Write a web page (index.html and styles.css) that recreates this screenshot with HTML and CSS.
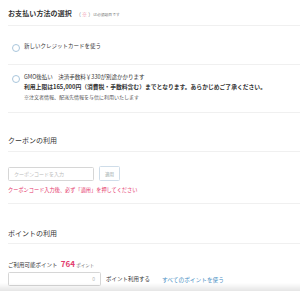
FILE: index.html
```html
<!DOCTYPE html>
<html lang="ja">
<head>
<meta charset="utf-8">
<link rel="stylesheet" href="styles.css">
</head>
<body>
<div class="page">
  <div class="title-row">
    <span class="title">お支払い方法の選択</span>
    <span class="req"><span class="paren">（&nbsp;<span class="star">※</span>&nbsp;）</span>は必須項目です</span>
  </div>
  <div class="opt opt-card">
    <span class="radio"></span>
    <span class="opt-text">新しいクレジットカードを使う</span>
  </div>
  <div class="opt opt-gmo">
    <span class="radio"></span>
    <div class="gmo-lines">
      <div class="gmo-l1">GMO後払い　決済手数料￥330が別途かかります</div>
      <div class="gmo-l2">利用上限は165,000円（消費税・手数料含む）までとなります。あらかじめご了承ください。</div>
      <div class="gmo-l3">※注文者情報、配送先情報を与信に利用いたします</div>
    </div>
  </div>

  <div class="sec-head sec-coupon">クーポンの利用</div>
  <div class="coupon-row">
    <div class="input coupon-input">クーポンコードを入力</div>
    <div class="btn">適用</div>
  </div>
  <div class="coupon-note">クーポンコード入力後、必ず「適用」を押してください</div>

  <div class="sec-head sec-point">ポイントの利用</div>
  <div class="avail">ご利用可能ポイント <span class="pts">764</span> <span class="pt-unit">ポイント</span></div>
  <div class="point-row">
    <div class="input point-input">0</div>
    <span class="use">ポイント利用する</span>
    <span class="all">すべてのポイントを使う</span>
  </div>
</div>
<div class="bottom-shade"></div>
</body>
</html>
```

FILE: styles.css
```css
html, body {
  margin: 0;
  padding: 0;
  background: #fff;
  overflow: hidden;
}
body {
  font-family: "Noto Sans CJK JP", "Noto Sans", sans-serif;
  color: #333;
  width: 300px;
  height: 291px;
}
.page {
  padding-left: 8px;
}
.title-row {
  height: 26px;
  display: flex;
  align-items: center;
  padding-top: 1px;
  box-sizing: border-box;
  border-bottom: 1px solid #f0f0f0;
}
.title {
  font-size: 7px;
  font-weight: bold;
  color: #333;
  letter-spacing: 0.1px;
}
.req {
  font-size: 3.8px;
  color: #777;
  margin-left: 4px;
  white-space: nowrap;
}
.paren {
  font-size: 5px;
  color: #888;
}
.star {
  color: #f08aa4;
}
.opt {
  display: flex;
  align-items: flex-start;
  border-bottom: 1px solid #f0f0f0;
  box-sizing: border-box;
}
.radio {
  width: 6px;
  height: 6px;
  border: 0.8px solid #a9c6dc;
  border-radius: 50%;
  margin-left: 4px;
  margin-top: 1.5px;
  flex: none;
}
.opt-card {
  height: 39px;
  padding-top: 16px;
}
.opt-text {
  font-size: 5.5px;
  line-height: 10px;
  margin-left: 4px;
  margin-top: -1px;
}
.opt-gmo {
  height: 48px;
  padding-top: 8px;
}
.gmo-lines {
  margin-left: 4px;
  margin-top: -1px;
  line-height: 10px;
  white-space: nowrap;
}
.gmo-l1 {
  font-size: 5.5px;
}
.gmo-l2 {
  font-size: 5.8px;
  font-weight: bold;
}
.gmo-l3 {
  font-size: 5px;
  color: #555;
}
.sec-head {
  font-size: 7px;
  line-height: 10px;
  color: #333;
  border-bottom: 1px solid #f0f0f0;
  box-sizing: border-box;
}
.sec-coupon {
  height: 39px;
  padding-top: 22px;
}
.coupon-row {
  display: flex;
  align-items: center;
  margin-top: 14px;
  height: 15px;
}
.input {
  height: 14px;
  box-sizing: border-box;
  border: 1px solid #d6d6d6;
  border-radius: 1.5px;
  font-size: 5px;
  line-height: 12px;
  color: #bbb;
}
.coupon-input {
  width: 86px;
  padding-left: 5px;
}
.btn {
  width: 21px;
  height: 15px;
  box-sizing: border-box;
  border: 1px solid #cfdde9;
  border-radius: 1.5px;
  margin-left: 5px;
  font-size: 4.5px;
  color: #9aa;
  display: flex;
  align-items: center;
  justify-content: center;
}
.coupon-note {
  font-size: 5.2px;
  line-height: 10px;
  color: #e5336b;
  margin-top: 4px;
  height: 18px;
  border-bottom: 1px solid #f0f0f0;
}
.sec-point {
  height: 40px;
  padding-top: 24px;
}
.avail {
  font-size: 5.5px;
  line-height: 10px;
  margin-top: 15px;
  white-space: nowrap;
}
.pts {
  font-size: 8px;
  font-weight: bold;
  color: #e23c6e;
  margin-left: 2px;
}
.pt-unit {
  font-size: 4.5px;
  color: #666;
}
.point-row {
  display: flex;
  align-items: center;
  margin-top: 2px;
  white-space: nowrap;
}
.point-input {
  width: 93px;
  text-align: right;
  padding-right: 5px;
  color: #bbb;
}
.use {
  font-size: 5.5px;
  margin-left: 5px;
  color: #333;
}
.all {
  font-size: 5.7px;
  color: #4a8fc4;
  margin-left: 12px;
}
.bottom-shade {
  position: fixed;
  left: 0;
  right: 0;
  bottom: 0;
  height: 8px;
  background: linear-gradient(to bottom, rgba(0,0,0,0), rgba(0,0,0,0.1));
}
```
